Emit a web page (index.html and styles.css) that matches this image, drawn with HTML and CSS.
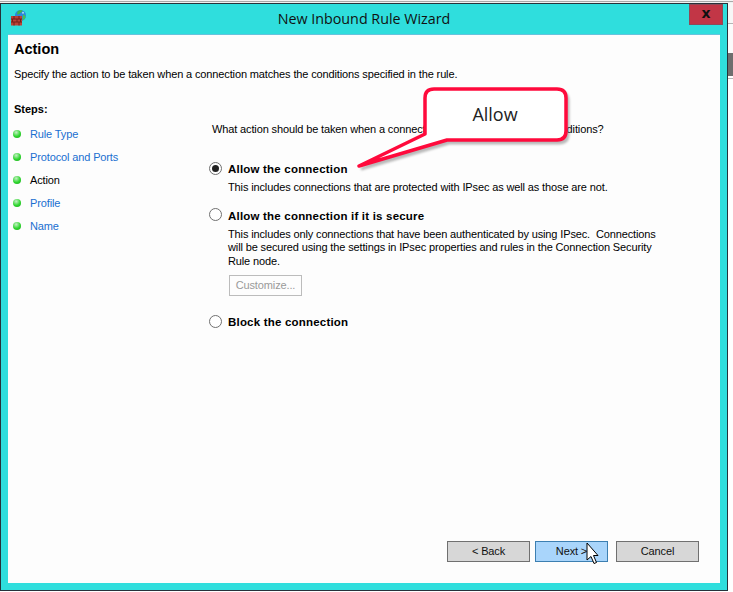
FILE: index.html
```html
<!DOCTYPE html>
<html lang="en">
<head>
<meta charset="utf-8">
<title>New Inbound Rule Wizard</title>
<link rel="stylesheet" href="styles.css">
</head>
<body>
<div class="desktop">
  <div class="top-strip"></div>
  <div class="main">
    <div class="window">
      <div class="titlebar">
        <svg class="app-icon" width="16" height="16" viewBox="0 0 16 16" aria-hidden="true">
          <circle cx="10.500" cy="5.500" r="5.500" fill="#2b87dd"/>
          <path d="M7.500 1.500C9 .2 11 0 12.500 .8C12 2.500 10 2.500 9.500 4L7 4.500Z" fill="#3fb64a"/>
          <path d="M13 4.500C14.500 4.500 15.500 6 15.500 7.500C14.500 9.500 13.500 10 12.500 10.500Z" fill="#43c257"/>
          <circle cx="13" cy="2.800" r="1" fill="#a8dcf5"/>
          <rect x="1" y="6" width="11" height="9.500" fill="#bb4238"/>
          <path d="M1 9h11M1 12h11M4 6v3M9 6v3M2.500 9v3M7 9v3M10.500 9v3M4 12v3.500M9 12v3.500" stroke="#741f1a" stroke-width="1" fill="none"/>
        </svg>
        <div class="title">New Inbound Rule Wizard</div>
        <div class="close"><span class="close-x">x</span></div>
      </div>
      <div class="client">
        <h1 class="heading">Action</h1>
        <p class="subtitle">Specify the action to be taken when a connection matches the conditions specified in the rule.</p>
        <div class="content">
          <nav class="steps">
            <div class="steps-title">Steps:</div>
            <ul class="step-list">
              <li class="step"><span class="dot"></span><span class="step-link">Rule Type</span></li>
              <li class="step"><span class="dot"></span><span class="step-link">Protocol and Ports</span></li>
              <li class="step"><span class="dot"></span><span class="step-current">Action</span></li>
              <li class="step"><span class="dot"></span><span class="step-link">Profile</span></li>
              <li class="step"><span class="dot"></span><span class="step-link">Name</span></li>
            </ul>
          </nav>
          <div class="panel">
            <p class="question">What action should be taken when a connection matches the specified conditions?</p>
            <div class="option first">
              <span class="radio checked"></span>
              <div class="option-label">Allow the connection</div>
            </div>
            <p class="option-desc">This includes connections that are protected with IPsec as well as those are not.</p>
            <div class="option second">
              <span class="radio"></span>
              <div class="option-label">Allow the connection if it is secure</div>
            </div>
            <p class="option-desc">This includes only connections that have been authenticated by using IPsec.&nbsp; Connections<br>will be secured using the settings in IPsec properties and rules in the Connection Security<br>Rule node.</p>
            <div class="customize">Customize...</div>
            <div class="option third">
              <span class="radio"></span>
              <div class="option-label">Block the connection</div>
            </div>
          </div>
        </div>
        <div class="footer">
          <div class="btn">&lt; Back</div>
          <div class="btn next">Next &gt;</div>
          <div class="btn cancel">Cancel</div>
        </div>
      </div>
    </div>
    <div class="side-strip">
      <div class="side-a"></div>
      <div class="side-line"></div>
      <div class="side-b"></div>
      <div class="side-dark"></div>
      <div class="side-line2"></div>
    </div>
  </div>
  <svg class="callout" width="733" height="592" viewBox="0 0 733 592" aria-hidden="true">
    <path class="callout-shadow" d="M434 89H557Q566 89 566 98V131Q566 140 557 140H447L359 166L425 134V98Q425 89 434 89Z"/>
    <path class="callout-shape" d="M434 89H557Q566 89 566 98V131Q566 140 557 140H447L359 166L425 134V98Q425 89 434 89Z"/>
  </svg>
  <div class="callout-text">Allow</div>
  <svg class="cursor" width="13" height="23" viewBox="0 0 13 23" aria-hidden="true">
    <path d="M1 1V18L5 14.500L8 21.500L10.500 20.500L7.500 13.500H12Z" fill="#fff" stroke="#000" stroke-width="1"/>
  </svg>
</div>
</body>
</html>
```

FILE: styles.css
```css
* { box-sizing: border-box; }
html, body { margin: 0; padding: 0; }
body {
  width: 733px;
  height: 592px;
  overflow: hidden;
  background: #fff;
  font-family: "Liberation Sans", Arial, sans-serif;
  font-size: 11px;
  letter-spacing: -.13px;
  color: #000;
}
.desktop { position: relative; width: 733px; height: 592px; overflow: hidden; }
.top-strip { height: 3px; background: linear-gradient(#f4f4f4 0 1px, #a8a8a8 1px 2px, #f0f0f0 2px); }
.main { display: flex; height: 589px; }
.window {
  width: 728px;
  height: 588px;
  background: #2fdedd;
  border: 1px solid #26323a;
  display: flex;
  flex-direction: column;
  padding: 0 7px 7px 7px;
}
.titlebar { height: 30px; display: flex; align-items: flex-start; position: relative; margin: 0 -1px; flex: none; }
.app-icon { position: absolute; left: 3px; top: 6px; }
.title { width: 100%; text-align: center; font-family: "Open Sans", sans-serif; letter-spacing: 0; font-size: 14.300px; line-height: 20px; padding-top: 5px; color: #111; }
.close {
  position: absolute; right: -2px; top: 0;
  width: 34px; height: 21px;
  background: #c23646;
  border: 1px solid #8e4a58;
  display: flex; align-items: center; justify-content: center;
}
.close-x { font-family: "DejaVu Sans", sans-serif; font-weight: 700; font-size: 14px; line-height: 14px; color: #111; margin-top: -3px; }
.client {
  flex: 1;
  background: #fdfdfd;
  border-top: 1px solid #67c3dd;
  display: flex;
  flex-direction: column;
  padding: 0 6px;
  min-height: 0;
}
.heading { margin: 4px 0 0; font-size: 14.500px; letter-spacing: 0; line-height: 20px; font-weight: 700; }
.subtitle { margin: 7px 0 0; line-height: 16px; }
.content { flex: 1; display: flex; min-height: 0; }
.steps { width: 198px; flex: none; padding-top: 19px; }
.steps-title { font-weight: 700; line-height: 16px; letter-spacing: 0; }
.step-list { list-style: none; margin: 5px 0 0; padding: 0; }
.step { display: flex; align-items: center; height: 23px; }
.dot {
  width: 8px; height: 8px; border-radius: 50%; margin-left: -1px; margin-right: 9px; flex: none;
  background: radial-gradient(circle at 40% 30%, #c5f0c5, #2ed62e 55%, #1ba51b);
}
.step-link { color: #1a6fd0; }
.step-current { color: #000; }
.panel { flex: 1; padding-top: 35px; }
.question { margin: 4px 0 0; line-height: 16px; }
.option { display: flex; align-items: center; margin-left: -3px; height: 16px; }
.first { margin-top: 24px; }
.second { margin-top: 13px; }
.third { margin-top: 18px; }
.radio {
  width: 13px; height: 13px; border: 1px solid #707070; border-radius: 50%;
  background: #fff; margin: -2px 6px 0 0; flex: none; position: relative;
  display: flex; align-items: center; justify-content: center;
}
.radio.checked::after { content: ""; width: 7px; height: 7px; border-radius: 50%; background: #222; }
.option-label { font-weight: 700; font-size: 11.500px; letter-spacing: .2px; }
.option-desc { margin: 4px 0 0 16px; line-height: 13.500px; white-space: nowrap; }
.customize {
  margin: 7px 0 0 17px; width: 73px; height: 21px;
  border: 1px solid #bcbcbc; color: #9a9a9a; background: #fdfdfd;
  text-align: center; line-height: 19px;
}
.footer { flex: none; display: flex; justify-content: flex-end; padding: 0 15px 21px 0; margin-left: auto; }
.btn {
  width: 83px; height: 21px; line-height: 19px; text-align: center;
  background: #d7d7d7; border: 1px solid #707070; margin-left: 5px; color: #111;
}
.next { width: 73px; background: #a9d5fb; border-color: #3c7fb1; margin-right: 3px; }
.side-strip { flex: 1; display: flex; flex-direction: column; }
.side-a { height: 20px; background: #f7f7f7; }
.side-line { height: 1px; background: #b5b5b5; }
.side-b { height: 29px; background: #fbfbfb; }
.side-dark { height: 23px; background: #6e6e6e; }
.side-line2 { height: 1px; margin-top: 2px; background: #b8b8b8; }
.callout { position: absolute; left: 0; top: 0; pointer-events: none; }
.callout-shadow { fill: #777; stroke: #777; stroke-width: 3; opacity: .5; transform: translate(2px, 3px); filter: blur(1px); }
.callout-shape { fill: #fff; stroke: #ff0a3c; stroke-width: 3.500; stroke-linejoin: round; }
.callout-text { position: absolute; left: 425px; top: 101px; width: 140px; text-align: center; font-family: "Open Sans", sans-serif; letter-spacing: 0; font-size: 18px; line-height: 26px; color: #222; }
.cursor { position: absolute; left: 586px; top: 542px; }
```
